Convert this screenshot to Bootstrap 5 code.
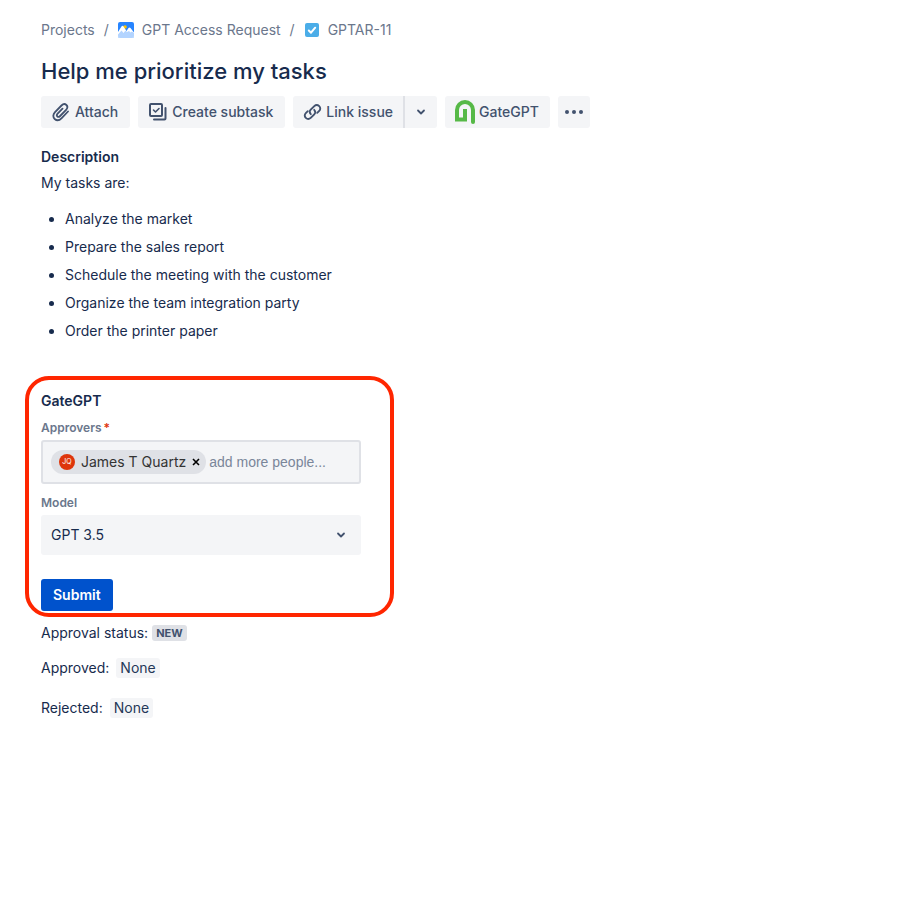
<!DOCTYPE html>
<html lang="en">
<head>
<meta charset="utf-8">
<meta name="viewport" content="width=device-width, initial-scale=1">
<title>Help me prioritize my tasks</title>
<link href="https://cdn.jsdelivr.net/npm/bootstrap@5.3.0/dist/css/bootstrap.min.css" rel="stylesheet">
<style>
body { font-family: Inter, "Liberation Sans", sans-serif; font-size: 14px; line-height: 20px; color: #172b4d; background: #fff; }
.issue { padding: 20px 25px; }
.inset { padding-left: 16px; padding-right: 16px; }
.crumbs { color: #6b778c; }
.crumbs a { color: inherit; text-decoration: none; }
.crumb-sep { width: 23px; text-align: center; }
.issue-title { font-size: 22px; line-height: 28px; font-weight: 500; margin: 17px 0 11px; }
.tool { --bs-btn-color: #42526e; --bs-btn-bg: #f4f5f7; --bs-btn-hover-bg: #ebecf0; --bs-btn-hover-color: #42526e; --bs-btn-border-width: 0; --bs-btn-font-size: 14px; --bs-btn-font-weight: 500; --bs-btn-line-height: 20px; --bs-btn-border-radius: 3px; height: 32px; padding: 0 12px 0 10px; display: inline-flex; align-items: center; gap: 5px; white-space: nowrap; }
.tool-tight { padding-right: 11px; gap: 4px; }
.tool-square { width: 32px; padding: 0; justify-content: center; }
.tool-split { border-left: 2px solid #dfe1e6; width: 34px; }
.section-title { font-size: 14px; line-height: 20px; font-weight: 600; margin: 0; }
.description { padding-top: 19px; }
.description p { margin: 6px 0 0; }
.tasks { padding-left: 24px; margin: 16px 0 35px; }
.tasks li + li { margin-top: 8px; }
.approval-panel { border: 4px solid #ff2600; border-radius: 24px; padding: 11px 29px 2px 12px; max-width: 369px; }
.field-label { font-size: 12px; line-height: 16px; font-weight: 600; color: #6b778c; margin: 9px 0 4px; }
.people-box + .field-label { margin-top: 11px; }
.required { color: #de350b; margin-left: 2px; }
.people-box { background: #f4f5f7; border: 2px solid #dfe1e6; border-radius: 3px; height: 44px; padding: 0 8px; gap: 3px; }
.person { background: #dfe1e6; color: #333; border-radius: 12px; height: 24px; padding: 0 6px 0 8px; gap: 6px; white-space: nowrap; }
.avatar { width: 16px; height: 16px; border-radius: 50%; background: #de350b; color: #fff; font-size: 7px; line-height: 16px; text-align: center; }
.remove { border: 0; background: none; padding: 0; width: 8px; height: 16px; display: flex; align-items: center; }
.people-input { border: 0; background: none; outline: 0; padding: 0; min-width: 0; font-family: "Liberation Sans", Arial, sans-serif; }
.people-input::placeholder { color: #7a869a; opacity: 1; }
.model-wrap { display: grid; align-items: center; }
.model-wrap > * { grid-area: 1 / 1; }
.model-wrap svg { justify-self: end; margin-right: 12px; pointer-events: none; }
.model-select { --bs-form-select-bg-img: none; background: #f4f5f7; border: 0; border-radius: 3px; height: 40px; padding: 0 36px 0 10px; font-size: 14px; line-height: 20px; color: #172b4d; }
.submit { --bs-btn-bg: #0052cc; --bs-btn-border-width: 0; --bs-btn-border-radius: 3px; --bs-btn-font-size: 14px; --bs-btn-font-weight: 600; --bs-btn-line-height: 20px; --bs-btn-padding-x: 12px; --bs-btn-padding-y: 6px; margin-top: 24px; }
.approval-state { padding-top: 6px; }
.status { background: #dfe1e6; color: #42526e; font-size: 11px; line-height: 16px; font-weight: 700; border-radius: 3px; padding: 0 4px; }
.result { background: #f4f5f7; color: #253858; border-radius: 3px; padding: 0 4px; }
.result-row { gap: 7px; margin-top: 15px; }
.result-row + .result-row { margin-top: 20px; }
</style>
<script src="https://cdn.jsdelivr.net/npm/bootstrap@5.3.0/dist/js/bootstrap.bundle.min.js"></script>
</head>
<body>
<main class="issue">
  <div class="inset">
    <nav class="crumbs d-flex flex-wrap align-items-center" aria-label="Breadcrumb">
      <a href="#">Projects</a>
      <span class="crumb-sep">/</span>
      <a href="#" class="d-flex align-items-center gap-2">
        <svg width="16" height="16" viewBox="0 0 16 16" aria-hidden="true"><rect width="16" height="16" rx="2" fill="#2684ff"/><circle cx="7" cy="5" r="1.800" fill="#ffc400"/><path d="M0 10 3.500 4.500Q4.500 3 5.500 4.500L8.500 9 10.500 6Q11.500 5 12.500 6L16 10.500V14a2 2 0 0 1-2 2H2a2 2 0 0 1-2-2Z" fill="#fff"/><path d="M0 14V12.500L3.500 8.500 5.500 11 7.500 8.500 9 10 11 9 12.500 10.500 14 9.500 16 11v3a2 2 0 0 1-2 2H2a2 2 0 0 1-2-2Z" fill="#b3d4ff"/></svg>
        <span>GPT Access Request</span>
      </a>
      <span class="crumb-sep">/</span>
      <a href="#" class="d-flex align-items-center gap-2">
        <svg width="16" height="16" viewBox="0 0 16 16" aria-hidden="true"><rect x="1" y="1" width="14" height="14" rx="2" fill="#4bade8"/><path d="m4.800 8.500 2.200 2.200 4.200-5" fill="none" stroke="#fff" stroke-width="2" stroke-linecap="round" stroke-linejoin="round"/></svg>
        <span>GPTAR-11</span>
      </a>
    </nav>
    <h1 class="issue-title">Help me prioritize my tasks</h1>
    <div class="d-flex flex-wrap gap-2">
      <button type="button" class="btn tool">
        <svg width="19" height="20" viewBox="0 0 19 20" fill="none" stroke="#42526e" stroke-width="1.800" stroke-linecap="round" stroke-linejoin="round" aria-hidden="true"><path d="m17 9.500-6.300 6.600c-2.200 2.300-5 2.700-7 .9-2-1.900-1.700-4.700.3-6.800l6.500-6.700c1.600-1.600 3.500-1.800 4.900-.5 1.400 1.400 1.200 3.200-.3 4.800l-6 6.200c-1 1-2 1.100-2.800.3-.8-.8-.6-1.700.3-2.600L11.500 6.700"/></svg>
        Attach
      </button>
      <button type="button" class="btn tool">
        <svg width="19" height="20" viewBox="0 0 19 20" fill="none" stroke="#42526e" stroke-width="2" stroke-linecap="round" stroke-linejoin="round" aria-hidden="true"><rect x="2" y="2" width="12" height="12" rx="1"/><path d="M17.500 6v10.500a1 1 0 0 1-1 1H6"/><path d="m5.500 8 2 2L11 6.500" stroke-width="1.600"/></svg>
        Create subtask
      </button>
      <div class="btn-group">
        <button type="button" class="btn tool tool-tight">
          <svg width="19" height="20" viewBox="0 0 19 20" fill="none" stroke="#42526e" stroke-width="1.900" stroke-linecap="round" aria-hidden="true"><path d="M7.800 12.200c-1.400-1.400-1.400-3.300-.1-4.600l3.600-3.500c1.500-1.400 3.500-1.300 4.900 0s1.400 3.300 0 4.700l-2 2"/><path d="M11.200 7.800c1.400 1.400 1.400 3.300.1 4.600l-3.600 3.500c-1.500 1.400-3.500 1.300-4.900 0s-1.400-3.300 0-4.700l2-2"/></svg>
          Link issue
        </button>
        <button type="button" class="btn tool tool-square tool-split" aria-label="More link options">
          <svg width="10" height="8" viewBox="0 0 10 8" fill="none" stroke="#42526e" stroke-width="1.800" stroke-linecap="round" stroke-linejoin="round" aria-hidden="true"><path d="m2 2.500 3 3 3-3"/></svg>
        </button>
      </div>
      <button type="button" class="btn tool tool-tight">
        <svg width="20" height="24" viewBox="0 0 20 24" fill="none" stroke="#56b947" stroke-width="4" aria-hidden="true"><path d="M18 22V10a8 8 0 0 0-16 0v9.500h8V9" stroke-linejoin="miter"/><path d="M18 20v2" stroke-linecap="round"/></svg>
        GateGPT
      </button>
      <button type="button" class="btn tool tool-square" aria-label="More actions">
        <svg width="18" height="4" viewBox="0 0 18 4" fill="#42526e" aria-hidden="true"><circle cx="2" cy="2" r="2"/><circle cx="9" cy="2" r="2"/><circle cx="16" cy="2" r="2"/></svg>
      </button>
    </div>
    <section class="description">
      <h2 class="section-title">Description</h2>
      <p>My tasks are:</p>
      <ul class="tasks">
        <li>Analyze the market</li>
        <li>Prepare the sales report</li>
        <li>Schedule the meeting with the customer</li>
        <li>Organize the team integration party</li>
        <li>Order the printer paper</li>
      </ul>
    </section>
  </div>
  <form class="approval-panel">
    <h2 class="section-title">GateGPT</h2>
    <label class="field-label d-block" for="people">Approvers<span class="required">*</span></label>
    <div class="people-box d-flex align-items-center">
      <span class="person d-flex align-items-center">
        <span class="avatar">JQ</span>James T Quartz
        <button type="button" class="remove" aria-label="Remove James T Quartz"><svg width="8" height="8" viewBox="0 0 8 8" stroke="#000" stroke-width="1.600" aria-hidden="true"><path d="m1 1 6 6M7 1 1 7"/></svg></button>
      </span>
      <input class="people-input flex-grow-1" id="people" type="text" placeholder="add more people...">
    </div>
    <label class="field-label d-block" for="model">Model</label>
    <div class="model-wrap">
      <select class="form-select model-select" id="model"><option>GPT 3.5</option></select>
      <svg width="16" height="8" viewBox="0 0 16 8" fill="none" stroke="#42526e" stroke-width="1.800" stroke-linecap="round" stroke-linejoin="round" aria-hidden="true"><path d="m5 2.500 3 3 3-3"/></svg>
    </div>
    <button type="submit" class="btn btn-primary submit">Submit</button>
  </form>
  <div class="inset approval-state">
    <div class="d-flex align-items-center gap-1">Approval status: <span class="status">NEW</span></div>
    <div class="result-row d-flex">Approved: <span class="result">None</span></div>
    <div class="result-row d-flex">Rejected: <span class="result">None</span></div>
  </div>
</main>
</body>
</html>
